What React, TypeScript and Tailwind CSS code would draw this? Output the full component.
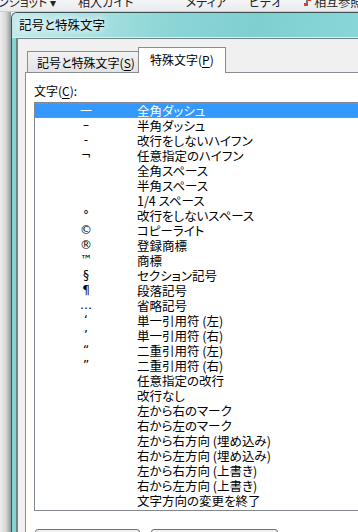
import React from "react";

const rows: [string, string][] = [
  ["—", "全角ダッシュ"],
  ["–", "半角ダッシュ"],
  ["-", "改行をしないハイフン"],
  ["¬", "任意指定のハイフン"],
  ["", "全角スペース"],
  ["", "半角スペース"],
  ["", "1/4 スペース"],
  ["°", "改行をしないスペース"],
  ["©", "コピーライト"],
  ["®", "登録商標"],
  ["™", "商標"],
  ["§", "セクション記号"],
  ["¶", "段落記号"],
  ["…", "省略記号"],
  ["‘", "単一引用符 (左)"],
  ["’", "単一引用符 (右)"],
  ["“", "二重引用符 (左)"],
  ["”", "二重引用符 (右)"],
  ["", "任意指定の改行"],
  ["", "改行なし"],
  ["", "左から右のマーク"],
  ["", "右から左のマーク"],
  ["", "左から右方向 (埋め込み)"],
  ["", "右から左方向 (埋め込み)"],
  ["", "左から右方向 (上書き)"],
  ["", "右から左方向 (上書き)"],
  ["", "文字方向の変更を終了"],
];

export default function App() {
  return (
    <div className="w-[358px] h-[532px] overflow-hidden bg-[#f0f0f0] text-black [font-family:'Noto_Sans_CJK_JP',sans-serif] [font-feature-settings:'palt'] text-[12px]">
      {/* Word ribbon behind */}
      <div className="h-[12px] overflow-hidden bg-[linear-gradient(#f3f4f6,#e9ebee)] border-b border-[#c9ccd2]">
        <div className="flex items-start -mt-[7px] h-[20px] leading-[18px] text-[12px] text-[#222]">
          <span className="whitespace-nowrap -ml-[2px]">ンショット ▾</span>
          <div className="w-px h-[20px] bg-[#c8c8c8] ml-[10px]" />
          <div className="ml-[8px] mt-[4px] w-[9px] h-[9px] rounded-full bg-[#2a6fd1]" />
          <span className="ml-[4px] whitespace-nowrap">相入ガイド</span>
          <span className="ml-[52px] whitespace-nowrap">メディア</span>
          <div className="w-px h-[20px] bg-[#c8c8c8] ml-[8px]" />
          <span className="ml-[14px] whitespace-nowrap">ビデオ</span>
          <div className="w-px h-[20px] bg-[#c8c8c8] ml-[16px]" />
          <div className="ml-[8px] mt-[3px] w-[10px] h-[10px] border border-[#777] bg-white relative">
            <div className="absolute right-[-1px] bottom-[-1px] w-[4px] h-[3px] bg-[#d9402a]" />
            <div className="absolute left-[1px] top-[1px] w-[3px] h-[3px] bg-[#d9402a]" />
          </div>
          <span className="ml-[6px] whitespace-nowrap">相互参照</span>
        </div>
      </div>

      <div className="flex h-[520px]">
        {/* shadow / background left of dialog */}
        <div className="w-[11px] shrink-0 bg-[linear-gradient(90deg,#eeeeee,#d6d6d6_55%,#8f9a9a)]" />

        {/* dialog */}
        <div className="flex-1 flex flex-col border-l border-t border-[#3f5252] rounded-tl-[6px] overflow-hidden bg-[#86d3d4]">
          {/* title bar */}
          <div className="h-[24px] shrink-0 flex items-center pl-[7px] bg-[linear-gradient(100deg,#c2eaea_0%,#a5e0e1_25%,#8dd5d6_45%,#7fcfd1_70%,#88d6d8_100%)]">
            <span className="leading-[16px] text-[12.5px] [text-shadow:0_0_6px_#ffffff,0_0_10px_#ffffff]">記号と特殊文字</span>
          </div>
          <div className="h-px shrink-0 bg-[#d7f0f0]" />
          <div className="flex flex-1">
            <div className="w-[4px] shrink-0 bg-[#86d3d4]" />
            {/* client */}
            <div className="flex-1 flex flex-col border-l-2 border-t border-[#6f8585] bg-[#f0f0f0] pl-[7px] pt-[8px]">
              {/* tabs */}
              <div className="flex items-end pl-[2px] h-[26px] relative z-10">
                <div className="w-[112px] h-[21px] mb-[1px] border border-b-0 border-[#898c95] bg-[linear-gradient(#f2f2f2,#e3e3e3)] pl-[9px] flex items-center leading-[15px] whitespace-nowrap">
                  記号と特殊文字(<span className="underline underline-offset-2">S</span>)
                </div>
                <div className="w-[88px] h-[26px] -ml-px border border-b-0 border-[#898c95] bg-white pl-[11px] pt-[4px] leading-[15px] whitespace-nowrap">
                  特殊文字(<span className="underline underline-offset-2">P</span>)
                </div>
              </div>
              {/* panel */}
              <div className="flex-1 -mt-px border-l border-t border-[#898c95] bg-white pl-[8px]">
                <div className="mt-[10px] h-[15px] leading-[15px]">
                  文字(<span className="underline underline-offset-2">C</span>):
                </div>
                <div className="mt-[4px] border-l border-t border-b border-[#828790] h-[409px] overflow-hidden">
                  {rows.map(([ch, name], i) => (
                    <div
                      key={i}
                      className={
                        i === 0
                          ? "flex h-[15px] leading-[13px] bg-[#3399ff] text-white border-y border-dotted border-[#c98a3a]"
                          : "flex h-[15px] leading-[15px]"
                      }
                    >
                      <span className="w-[102px] shrink-0 text-center [font-family:'DejaVu_Sans',sans-serif] text-[12px]">
                        {ch}
                      </span>
                      <span className="whitespace-nowrap text-[12.5px]">{name}</span>
                    </div>
                  ))}
                </div>
                <div className="flex mt-[18px] gap-[11px] pl-[1px]">
                  <div className="w-[105px] h-[23px] rounded-[3px] border border-[#707070] bg-[linear-gradient(#f2f2f2,#ebebeb_50%,#dddddd)]" />
                  <div className="w-[127px] h-[23px] rounded-[3px] border border-[#707070] bg-[linear-gradient(#f2f2f2,#ebebeb_50%,#dddddd)]" />
                </div>
              </div>
            </div>
          </div>
        </div>
      </div>
    </div>
  );
}
